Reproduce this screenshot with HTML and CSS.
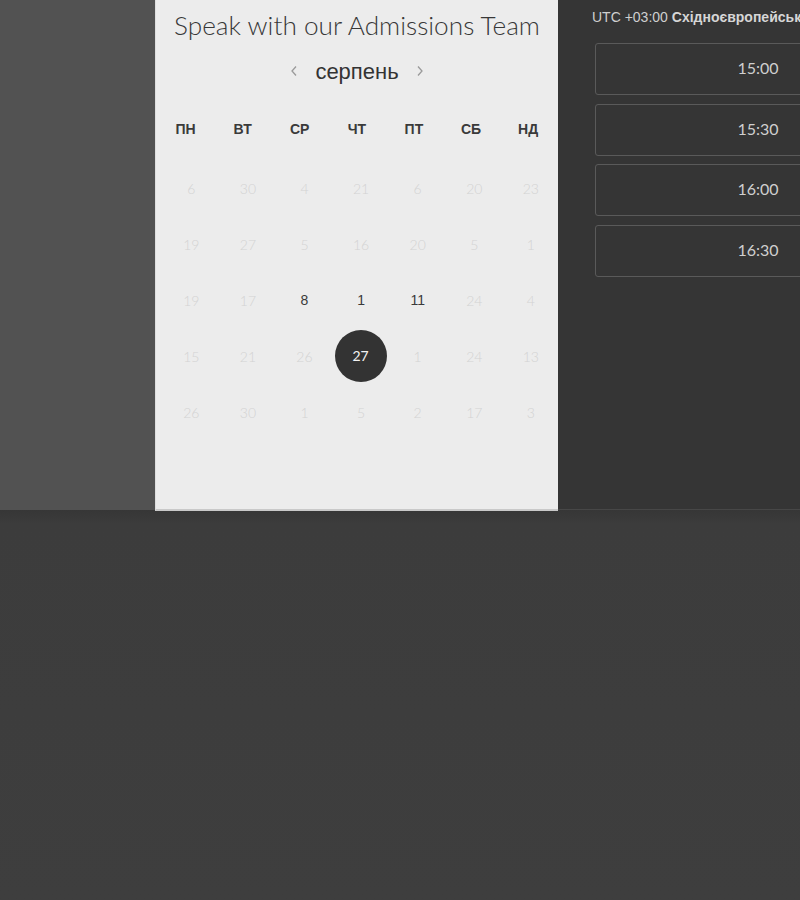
FILE: index.html
```html
<!DOCTYPE html>
<html lang="uk">
<head>
<meta charset="utf-8">
<title>Speak with our Admissions Team</title>
<link rel="stylesheet" href="styles.css">
</head>
<body>
<div class="top">
  <div class="side"></div>
  <section class="card">
    <h1 class="title">Speak with our Admissions Team</h1>
    <div class="month">
      <button class="nav" aria-label="prev"><svg width="8" height="12" viewBox="0 0 8 12"><path d="M6 1.5 L2 6 L6 10.5" fill="none" stroke="#9a9a9a" stroke-width="1.3"/></svg></button>
      <span class="month-name">серпень</span>
      <button class="nav" aria-label="next"><svg width="8" height="12" viewBox="0 0 8 12"><path d="M2 1.5 L6 6 L2 10.5" fill="none" stroke="#9a9a9a" stroke-width="1.3"/></svg></button>
    </div>
    <div class="weekdays">
      <span>ПН</span><span>ВТ</span><span>СР</span><span>ЧТ</span><span>ПТ</span><span>СБ</span><span>НД</span>
    </div>
    <div class="dates">
      <span>6</span><span>30</span><span>4</span><span>21</span><span>6</span><span>20</span><span>23</span>
      <span>19</span><span>27</span><span>5</span><span>16</span><span>20</span><span>5</span><span>1</span>
      <span>19</span><span>17</span><span class="on">8</span><span class="on">1</span><span class="on">11</span><span>24</span><span>4</span>
      <span>15</span><span>21</span><span>26</span><span class="sel"><b>27</b></span><span>1</span><span>24</span><span>13</span>
      <span>26</span><span>30</span><span>1</span><span>5</span><span>2</span><span>17</span><span>3</span>
    </div>
  </section>
  <aside class="times">
    <p class="tz">UTC +03:00 <strong>Східноєвропейський час</strong></p>
    <div class="slots">
      <button class="slot">15:00</button>
      <button class="slot">15:30</button>
      <button class="slot">16:00</button>
      <button class="slot">16:30</button>
    </div>
  </aside>
</div>
<div class="bottom"></div>
</body>
</html>
```

FILE: styles.css
```css
html, body {
  margin: 0;
  padding: 0;
}
body {
  background: #3d3d3d;
  width: 800px;
  height: 900px;
  overflow: hidden;
}
.top {
  display: flex;
  height: 510px;
}
.side {
  width: 155px;
  flex: none;
  background: #525252;
}
.card {
  width: 403px;
  flex: none;
  background: #ececec;
  border-left: 1px solid #dedede;
  border-bottom: 2px solid #c9c9c9;
  box-sizing: border-box;
  height: 511px;
}
.title {
  margin: 0;
  height: 50px;
  line-height: 50px;
  text-align: center;
  font-family: Lato, "Noto Sans", sans-serif;
  font-weight: 300;
  font-size: 26.2px;
  color: #383838;
  white-space: nowrap;
}
.month {
  margin-top: 2px;
  height: 40px;
  display: flex;
  align-items: center;
  justify-content: center;
  gap: 17px;
}
.nav {
  border: 0;
  background: none;
  padding: 0;
  width: 8px;
  height: 12px;
  display: flex;
  margin-top: -3px;
}
.month-name {
  font-family: "Liberation Sans", Arial, sans-serif;
  font-size: 22px;
  color: #333;
}
.weekdays {
  margin-top: 17px;
  height: 40px;
  display: grid;
  grid-template-columns: repeat(7, 57.1px);
  padding-left: 1px;
  align-items: center;
  font-family: "Liberation Sans", Arial, sans-serif;
  font-weight: 700;
  font-size: 14px;
  color: #3a3a3a;
}
.weekdays span {
  text-align: center;
}
.dates {
  margin-top: 11px;
  display: grid;
  grid-template-columns: repeat(7, 56.6px);
  grid-auto-rows: 56px;
  padding-left: 7px;
  font-family: Lato, "Noto Sans", sans-serif;
  font-weight: 300;
  font-size: 14px;
  color: #d3d3d3;
}
.dates span {
  display: flex;
  align-items: center;
  justify-content: center;
}
.dates .on {
  font-family: "Liberation Sans", Arial, sans-serif;
  font-weight: 400;
  color: #3a3a3a;
}
.dates .sel b {
  width: 52px;
  height: 52px;
  border-radius: 50%;
  background: #333;
  color: #f2f2f2;
  font-weight: 400;
  font-family: Lato, "Noto Sans", sans-serif;
  display: flex;
  align-items: center;
  justify-content: center;
  margin-left: -1px;
  padding-bottom: 2px;
  box-sizing: border-box;
}
.times {
  flex: 1;
  min-width: 0;
  background: #353535;
  border-bottom: 1px solid #474747;
  height: 510px;
  box-sizing: border-box;
  overflow: hidden;
  padding-left: 34px;
}
.tz {
  margin: 9px 0 0;
  height: 17px;
  line-height: 17px;
  font-family: "Liberation Sans", Arial, sans-serif;
  font-size: 14px;
  color: #cfcfcf;
  white-space: nowrap;
}
.tz strong {
  font-weight: 700;
  color: #d6d6d6;
}
.slots {
  margin-top: 17px;
  margin-left: 3px;
  display: flex;
  flex-direction: column;
  gap: 8.7px;
  width: 326px;
}
.slot {
  height: 52px;
  box-sizing: border-box;
  border: 1px solid #5a5a5a;
  border-radius: 3px;
  background: #353535;
  color: #cfcfcf;
  font-family: Lato, "Noto Sans", sans-serif;
  font-size: 16px;
  font-weight: 400;
  text-align: center;
  padding: 0 0 3px;
  flex: none;
}
.bottom {
  height: 390px;
  background: linear-gradient(#363636 0, #3c3c3c 14px, #3e3e3e 100%);
}
```
